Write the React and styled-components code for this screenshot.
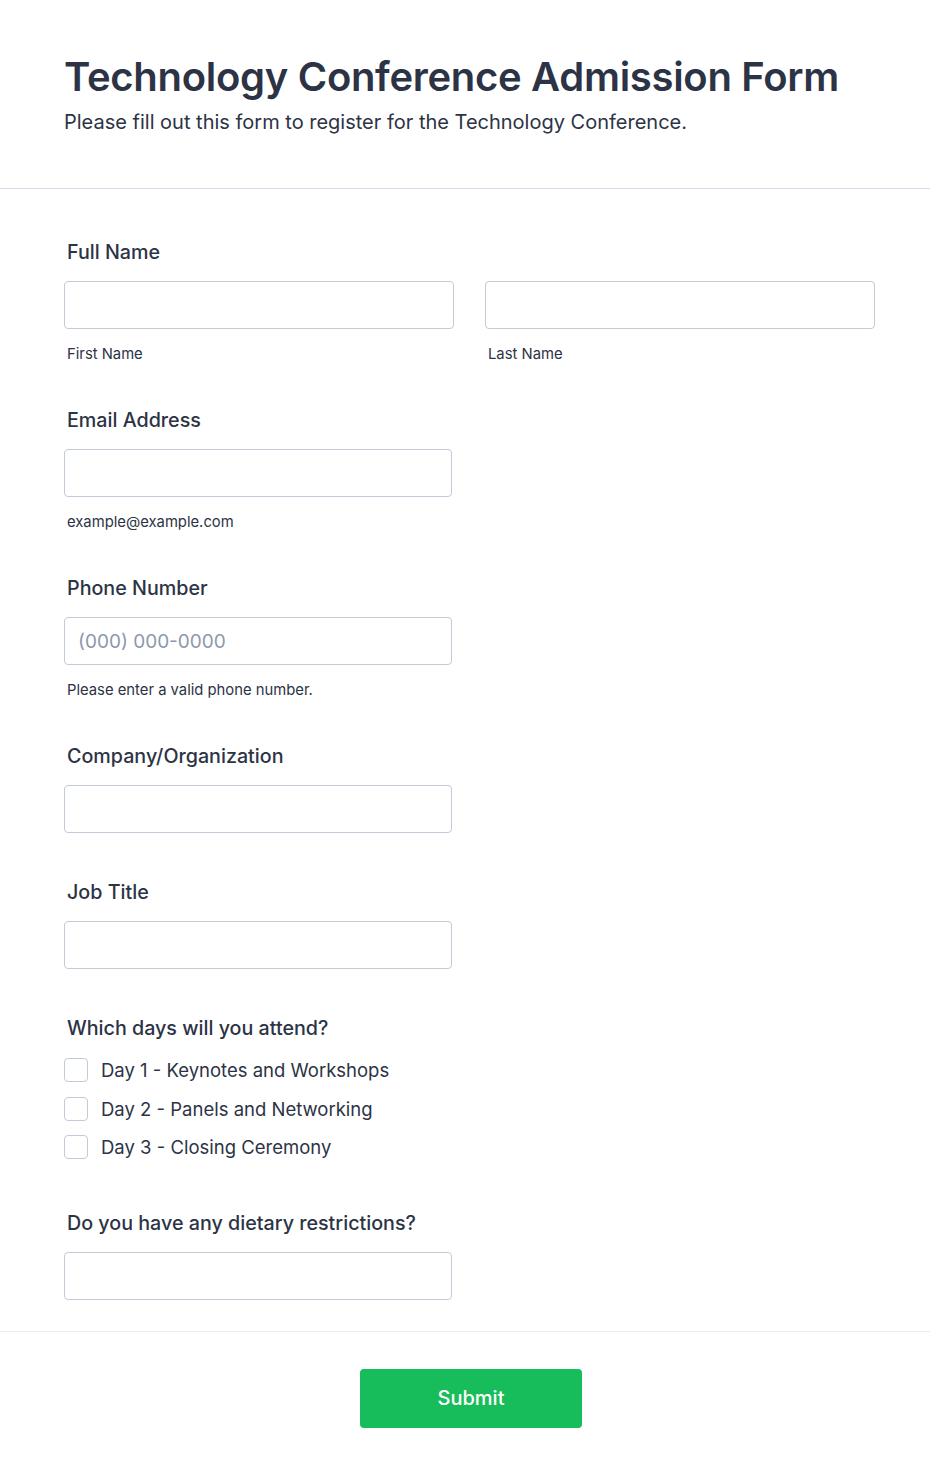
import React from 'react';
import styled, { createGlobalStyle } from 'styled-components';

const GlobalStyle = createGlobalStyle`
  html, body {
    margin: 0;
    padding: 0;
    background: #ffffff;
    font-family: Inter, "Noto Sans", sans-serif;
    color: #2c3345;
  }
  * { box-sizing: border-box; }
`;

const Page = styled.div`
  width: 930px;
  min-height: 1478px;
  background: #ffffff;
`;

const Header = styled.header`
  padding: 53px 64px 52px 64px;
  border-bottom: 1px solid #d8dae9;
`;

const Title = styled.h1`
  margin: 0;
  font-size: 40px;
  line-height: 48px;
  font-weight: 600;
  letter-spacing: -0.3px;
  color: #2c3345;
`;

const Subtitle = styled.p`
  margin: 7px 0 0;
  font-size: 20px;
  line-height: 28px;
  font-weight: 400;
  color: #2c3345;
`;

const Body = styled.main`
  padding: 51px 55px 31px 64px;
  display: flex;
  flex-direction: column;
  gap: 47px;
  border-bottom: 1px solid #eaecf3;
`;

const Field = styled.div`
  display: flex;
  flex-direction: column;
`;

const Label = styled.label`
  font-size: 19.7px;
  line-height: 24px;
  font-weight: 500;
  padding-left: 3px;
  margin-bottom: 17px;
  color: #2c3345;
`;

const Row = styled.div`
  display: grid;
  grid-template-columns: 390px 390px;
  column-gap: 31px;
`;

const Col = styled.div`
  display: flex;
  flex-direction: column;
`;

const Input = styled.input`
  width: ${p => p.$w || '388px'};
  height: 48px;
  border: 1px solid #c3cad8;
  border-radius: 4px;
  padding: 0 13px;
  font-family: Inter, "Noto Sans", sans-serif;
  font-size: 19px;
  color: #2c3345;
  background: #ffffff;
  outline: none;
  &::placeholder {
    color: #8d97ad;
  }
`;

const Sub = styled.span`
  margin: 17px 0 -1px;
  font-size: 14.8px;
  line-height: 16px;
  padding-left: 3px;
  color: #2c3345;
`;

const Options = styled.div`
  display: flex;
  flex-direction: column;
  margin-top: -6px;
  margin-bottom: -3px;
`;

const Option = styled.label`
  display: flex;
  align-items: center;
  height: 38.5px;
  gap: 13px;
  font-size: 18.5px;
  color: #2c3345;
`;

const Box = styled.span`
  width: 24px;
  height: 24px;
  border: 1px solid #c3cad8;
  border-radius: 4px;
  background: #ffffff;
  flex-shrink: 0;
`;

const Footer = styled.footer`
  display: flex;
  justify-content: center;
  padding: 37px 0 50px 0;
`;

const Button = styled.button`
  width: 222px;
  height: 59px;
  margin-left: 12px;
  border: none;
  border-radius: 4px;
  background: #18bd5b;
  color: #ffffff;
  font-family: Inter, "Noto Sans", sans-serif;
  font-size: 20px;
  font-weight: 500;
  cursor: pointer;
`;

const days = [
  'Day 1 - Keynotes and Workshops',
  'Day 2 - Panels and Networking',
  'Day 3 - Closing Ceremony',
];

export default function App() {
  return (
    <Page>
      <GlobalStyle />
      <Header>
        <Title>Technology Conference Admission Form</Title>
        <Subtitle>Please fill out this form to register for the Technology Conference.</Subtitle>
      </Header>
      <Body>
        <Field>
          <Label>Full Name</Label>
          <Row>
            <Col>
              <Input $w="390px" />
              <Sub>First Name</Sub>
            </Col>
            <Col>
              <Input $w="390px" />
              <Sub>Last Name</Sub>
            </Col>
          </Row>
        </Field>
        <Field>
          <Label>Email Address</Label>
          <Input type="email" />
          <Sub>example@example.com</Sub>
        </Field>
        <Field>
          <Label>Phone Number</Label>
          <Input placeholder="(000) 000-0000" />
          <Sub>Please enter a valid phone number.</Sub>
        </Field>
        <Field>
          <Label>Company/Organization</Label>
          <Input />
        </Field>
        <Field>
          <Label>Job Title</Label>
          <Input />
        </Field>
        <Field>
          <Label>Which days will you attend?</Label>
          <Options>
            {days.map(d => (
              <Option key={d}>
                <Box />
                {d}
              </Option>
            ))}
          </Options>
        </Field>
        <Field>
          <Label>Do you have any dietary restrictions?</Label>
          <Input />
        </Field>
      </Body>
      <Footer>
        <Button type="button">Submit</Button>
      </Footer>
    </Page>
  );
}
